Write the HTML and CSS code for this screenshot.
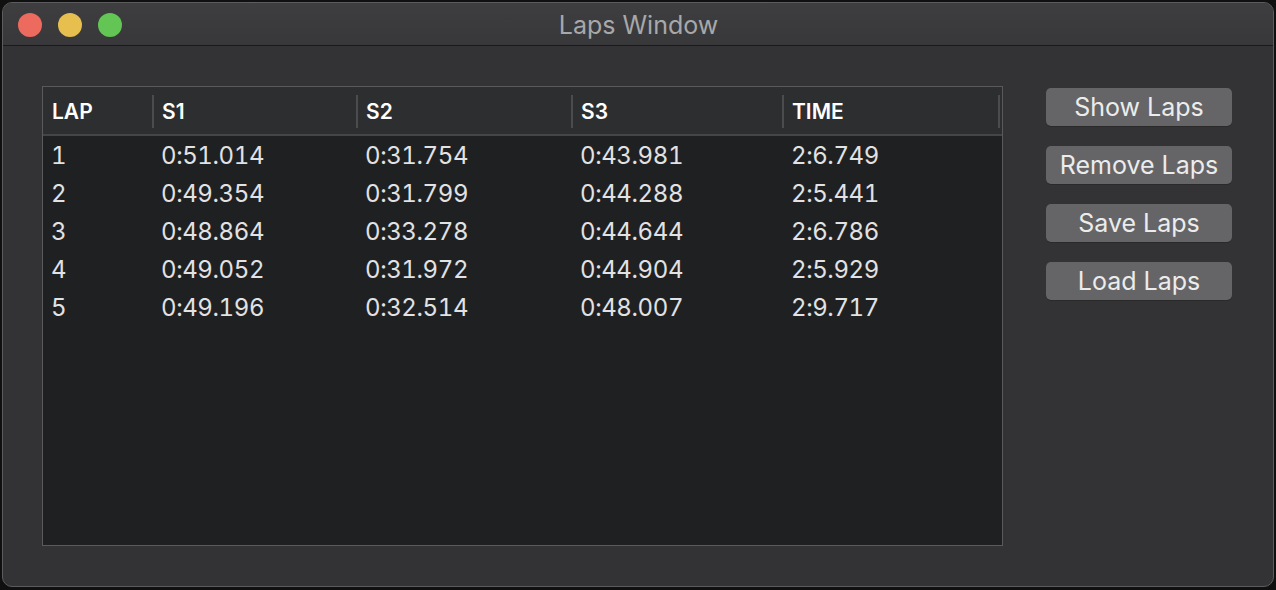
FILE: index.html
```html
<!DOCTYPE html>
<html>
<head>
<meta charset="utf-8">
<link rel="stylesheet" href="styles.css">
</head>
<body>
<div class="window">
  <div class="titlebar">
    <div class="lights">
      <span class="light red"></span>
      <span class="light yellow"></span>
      <span class="light green"></span>
    </div>
    <div class="title">Laps Window</div>
  </div>
  <div class="content">
    <div class="table">
      <div class="thead">
        <div class="th">LAP</div>
        <div class="th sep">S1</div>
        <div class="th sep">S2</div>
        <div class="th sep">S3</div>
        <div class="th sep last">TIME</div>
      </div>
      <div class="tbody">
        <div class="tr"><div>1</div><div>0:51.014</div><div>0:31.754</div><div>0:43.981</div><div>2:6.749</div></div>
        <div class="tr"><div>2</div><div>0:49.354</div><div>0:31.799</div><div>0:44.288</div><div>2:5.441</div></div>
        <div class="tr"><div>3</div><div>0:48.864</div><div>0:33.278</div><div>0:44.644</div><div>2:6.786</div></div>
        <div class="tr"><div>4</div><div>0:49.052</div><div>0:31.972</div><div>0:44.904</div><div>2:5.929</div></div>
        <div class="tr"><div>5</div><div>0:49.196</div><div>0:32.514</div><div>0:48.007</div><div>2:9.717</div></div>
      </div>
    </div>
    <div class="buttons">
      <button class="btn">Show Laps</button>
      <button class="btn">Remove Laps</button>
      <button class="btn">Save Laps</button>
      <button class="btn">Load Laps</button>
    </div>
  </div>
</div>
</body>
</html>
```

FILE: styles.css
```css
* { box-sizing: border-box; }
html, body { margin: 0; padding: 0; }
body {
  width: 1276px;
  height: 590px;
  background: #101010;
  font-family: Inter, "Noto Sans", sans-serif;
  padding: 2px;
  overflow: hidden;
}
.window {
  width: 1272px;
  height: 585px;
  background: #333335;
  border: 1px solid #5c5c5e;
  border-radius: 10px;
  overflow: hidden;
  display: flex;
  flex-direction: column;
}
.titlebar {
  height: 43px;
  flex: none;
  background: linear-gradient(#3e3e40, #38383a);
  border-bottom: 1px solid #1a1a1a;
  display: flex;
  align-items: center;
  position: relative;
}
.lights {
  display: flex;
  gap: 16px;
  padding-left: 15px;
  padding-top: 1px;
}
.light {
  width: 24px;
  height: 24px;
  border-radius: 50%;
  display: block;
}
.red { background: #ed6a5e; }
.yellow { background: #e6bf4f; }
.green { background: #62c554; }
.title {
  position: absolute;
  left: 0;
  right: 0;
  top: 0;
  bottom: 0;
  display: flex;
  align-items: center;
  justify-content: center;
  color: #a8a8aa;
  font-size: 25px;
  padding-left: 1px;
  padding-top: 1px;
}
.content {
  flex: 1;
  display: flex;
  padding: 40px 0 0 39px;
}
.table {
  width: 961px;
  height: 460px;
  border: 1px solid #5a5a5c;
  background: #1f2022;
  display: flex;
  flex-direction: column;
}
.thead {
  height: 49px;
  background: #2c2e30;
  border-bottom: 2px solid #434547;
  display: grid;
  grid-template-columns: 109px 204px 215px 211px 218px 1fr;
  align-items: center;
}
.th {
  height: 33px;
  display: flex;
  align-items: center;
  padding-left: 9px;
  color: #ffffff;
  font-weight: 600;
  font-size: 21px;
  margin-top: 1px;
}
.th.sep { border-left: 2px solid #4a4c4e; padding-left: 8px; }
.th.last { border-right: 2px solid #4a4c4e; }
.tbody {
  display: flex;
  flex-direction: column;
}
.tr {
  height: 38px;
  display: grid;
  grid-template-columns: 109px 204px 215px 211px 218px 1fr;
  align-items: center;
  color: #e2e2e4;
  font-size: 24px;
  letter-spacing: -0.4px;
  font-variant-numeric: tabular-nums;
}
.tr > div { padding-left: 9px; }
.tr > div:first-child { padding-left: 8px; }
.buttons {
  display: flex;
  flex-direction: column;
  gap: 20px;
  margin-left: 43px;
  margin-top: 2px;
}
.btn {
  width: 186px;
  height: 38px;
  background: #656567;
  border: none;
  border-radius: 5px;
  color: #ececec;
  font-family: Inter, "Noto Sans", sans-serif;
  font-size: 25px;
  padding: 0;
  white-space: nowrap;
  box-shadow: 0 1px 0 #2a2a2a;
}
```
